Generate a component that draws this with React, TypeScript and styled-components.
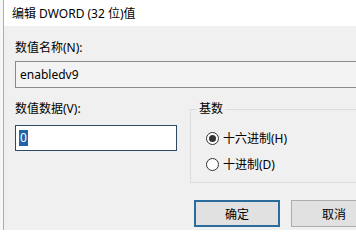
import React from 'react'
import styled, { createGlobalStyle } from 'styled-components';

const GlobalStyle = createGlobalStyle`
  html, body {
    margin: 0;
    padding: 0;
    background: #ffffff;
  }
  body {
    font-family: "Noto Sans", "Noto Sans CJK SC", sans-serif;
    font-size: 12px;
    color: #000000;
  }
`;

const App: React.FC = () => {
  return (
    <>
      <GlobalStyle />
      <WINDOW>
        <EDGE />
        <DIALOG>
          <TITLEBAR>编辑 DWORD (32 位)值</TITLEBAR>
          <BODY>
            <LABEL>数值名称(N):</LABEL>
            <NAMEFIELD>enabledv9</NAMEFIELD>
            <MIDROW>
              <VALUECOLUMN>
                <LABEL>数值数据(V):</LABEL>
                <VALUEFIELD>
                  <SELECTED>0</SELECTED>
                </VALUEFIELD>
              </VALUECOLUMN>
              <GROUP>
                <LEGEND>基数</LEGEND>
                <RADIOLIST>
                  <RADIOROW>
                    <RADIO $checked />
                    十六进制(H)
                  </RADIOROW>
                  <RADIOROW>
                    <RADIO />
                    十进制(D)
                  </RADIOROW>
                </RADIOLIST>
              </GROUP>
            </MIDROW>
            <BUTTONROW>
              <BUTTON $primary>确定</BUTTON>
              <BUTTON>取消</BUTTON>
            </BUTTONROW>
          </BODY>
        </DIALOG>
      </WINDOW>
    </>
  )
}

const WINDOW = styled.div`
  display: flex;
  width: 356px;
  height: 230px;
  overflow: hidden;
`;

const EDGE = styled.div`
  flex: 0 0 3px;
  background: #f7f7f7;
  border-right: 1px solid #9fb0c4;
`;

const DIALOG = styled.div`
  flex: 1;
  display: flex;
  flex-direction: column;
  min-width: 0;
`;

const TITLEBAR = styled.div`
  height: 26px;
  flex: 0 0 26px;
  display: flex;
  align-items: center;
  padding-left: 8px;
  background: #ffffff;
  font-size: 12px;
  color: #000000;
  white-space: nowrap;
`;

const BODY = styled.div`
  flex: 1;
  background: #f0f0f0;
  padding: 14px 0 0 11px;
  display: flex;
  flex-direction: column;
`;

const LABEL = styled.div`
  line-height: 16px;
  height: 16px;
  white-space: nowrap;
`;

const NAMEFIELD = styled.div`
  margin-top: 5px;
  width: 400px;
  height: 27px;
  box-sizing: border-box;
  border: 1px solid #8a8a8a;
  background: #f3f3f3;
  padding-left: 4px;
  display: flex;
  align-items: center;
`;

const MIDROW = styled.div`
  margin-top: 13px;
  display: flex;
  gap: 13px;
`;

const VALUECOLUMN = styled.div`
  flex: 0 0 162px;
  display: flex;
  flex-direction: column;
`;

const VALUEFIELD = styled.div`
  margin-top: 8px;
  height: 26px;
  box-sizing: border-box;
  border: 1px solid #2f4a60;
  background: #ffffff;
  padding-left: 3px;
  display: flex;
  align-items: center;
`;

const SELECTED = styled.span`
  background: #1f63a8;
  color: #ffffff;
  line-height: 16px;
  padding: 0 1px;
`;

const GROUP = styled.fieldset`
  flex: 0 0 220px;
  margin: 0;
  padding: 0 0 9px 6px;
  border: 1px solid #dcdcdc;
  min-width: 0;
`;

const LEGEND = styled.legend`
  padding: 0 2px;
  line-height: 16px;
`;

const RADIOLIST = styled.div`
  display: flex;
  flex-direction: column;
  gap: 8px;
  padding: 12px 0 0 9px;
`;

const RADIOROW = styled.div`
  display: flex;
  align-items: center;
  gap: 4px;
  height: 18px;
  white-space: nowrap;
`;

const RADIO = styled.span<{ $checked?: boolean }>`
  width: 13px;
  height: 13px;
  box-sizing: border-box;
  border-radius: 50%;
  border: 1px solid #333333;
  background: #ffffff;
  display: flex;
  align-items: center;
  justify-content: center;

  &::after {
    content: '';
    width: 7px;
    height: 7px;
    border-radius: 50%;
    background: #333333;
    display: ${({ $checked }) => ($checked ? 'block' : 'none')};
  }
`;

const BUTTONROW = styled.div`
  margin-top: 17px;
  margin-left: 179px;
  display: flex;
  gap: 11px;
`;

const BUTTON = styled.div<{ $primary?: boolean }>`
  flex: 0 0 86px;
  height: 27px;
  box-sizing: border-box;
  background: #e1e1e1;
  border: ${({ $primary }) => ($primary ? '2px solid #2a6d9c' : '1px solid #adadad')};
  display: flex;
  align-items: center;
  justify-content: center;
  white-space: nowrap;
`;

export default App
